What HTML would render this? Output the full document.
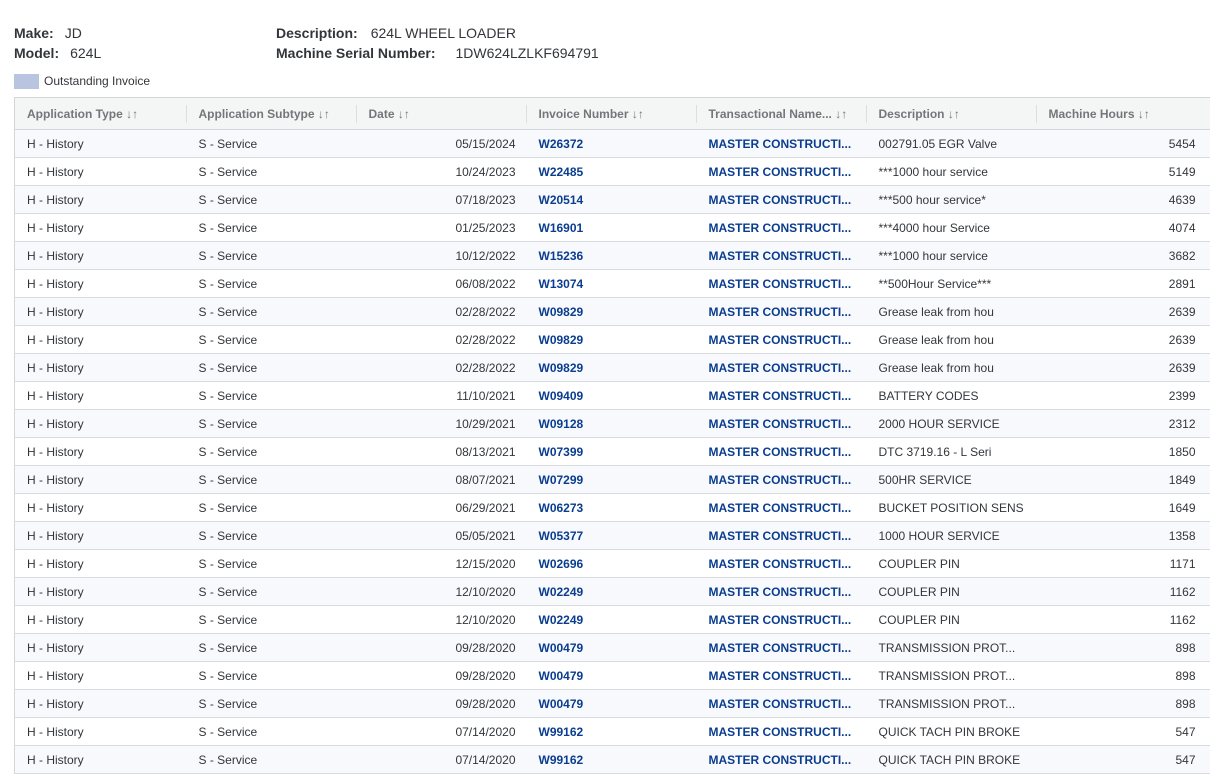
<!DOCTYPE html>
<html><head><meta charset="utf-8"><style>
*{margin:0;padding:0;box-sizing:border-box}
body{width:1210px;height:775px;overflow:hidden;background:#fff;font-family:"Liberation Sans",Arial,sans-serif;color:#32363a;position:relative}
.info{position:absolute;font-size:14px;line-height:20px}
.info b{color:#32363a;margin-right:11px}
.leg{position:absolute;left:14px;top:74px;font-size:12px;color:#32363a}
.leg span{display:inline-block;width:25px;height:15px;background:#b9c4e0;vertical-align:middle;margin-right:5px}
table{position:absolute;left:14px;top:97px;width:1196px;border-collapse:collapse;table-layout:fixed;font-size:12px;border-left:1px solid #d3d6d9;border-top:1px solid #d3d6d9}
th{height:32px;background:#f4f5f5;color:#74777a;font-weight:bold;text-align:left;padding-left:12px;border-bottom:1px solid #d3d6d9;position:relative;white-space:nowrap}
th:after{content:"";position:absolute;right:0;top:7px;height:18px;border-right:1px solid #dcdfe1}
td{height:28px;padding:0 12px;border-bottom:1px solid #d9dcdf;white-space:nowrap;overflow:hidden}
tr:nth-child(even) td{background:#f8f9fc}
td.r{text-align:right;padding-right:11px}
td:last-child.r{padding-right:15px}
td.l{color:#0a3d8f;font-weight:bold}
</style></head><body>
<div class="info" style="left:14px;top:23px"><b>Make:</b>JD<br><b>Model:</b>624L</div>
<div class="info" style="left:276px;top:23px"><b style="margin-right:13px">Description:</b>624L WHEEL LOADER<br><b style="margin-right:20px">Machine Serial Number:</b>1DW624LZLKF694791</div>
<div class="leg"><span></span>Outstanding Invoice</div>
<table>
<colgroup><col style="width:172px"><col style="width:170px"><col style="width:170px"><col style="width:170px"><col style="width:170px"><col style="width:170px"><col style="width:174px"></colgroup>
<tr><th>Application Type ↓↑</th><th>Application Subtype ↓↑</th><th>Date ↓↑</th><th>Invoice Number ↓↑</th><th>Transactional Name... ↓↑</th><th>Description ↓↑</th><th>Machine Hours ↓↑</th></tr>
<tr><td>H - History</td><td>S - Service</td><td class="r">05/15/2024</td><td class="l">W26372</td><td class="l">MASTER CONSTRUCTI...</td><td>002791.05 EGR Valve</td><td class="r">5454</td></tr>
<tr><td>H - History</td><td>S - Service</td><td class="r">10/24/2023</td><td class="l">W22485</td><td class="l">MASTER CONSTRUCTI...</td><td>***1000 hour service</td><td class="r">5149</td></tr>
<tr><td>H - History</td><td>S - Service</td><td class="r">07/18/2023</td><td class="l">W20514</td><td class="l">MASTER CONSTRUCTI...</td><td>***500 hour service*</td><td class="r">4639</td></tr>
<tr><td>H - History</td><td>S - Service</td><td class="r">01/25/2023</td><td class="l">W16901</td><td class="l">MASTER CONSTRUCTI...</td><td>***4000 hour Service</td><td class="r">4074</td></tr>
<tr><td>H - History</td><td>S - Service</td><td class="r">10/12/2022</td><td class="l">W15236</td><td class="l">MASTER CONSTRUCTI...</td><td>***1000 hour service</td><td class="r">3682</td></tr>
<tr><td>H - History</td><td>S - Service</td><td class="r">06/08/2022</td><td class="l">W13074</td><td class="l">MASTER CONSTRUCTI...</td><td>**500Hour Service***</td><td class="r">2891</td></tr>
<tr><td>H - History</td><td>S - Service</td><td class="r">02/28/2022</td><td class="l">W09829</td><td class="l">MASTER CONSTRUCTI...</td><td>Grease leak from hou</td><td class="r">2639</td></tr>
<tr><td>H - History</td><td>S - Service</td><td class="r">02/28/2022</td><td class="l">W09829</td><td class="l">MASTER CONSTRUCTI...</td><td>Grease leak from hou</td><td class="r">2639</td></tr>
<tr><td>H - History</td><td>S - Service</td><td class="r">02/28/2022</td><td class="l">W09829</td><td class="l">MASTER CONSTRUCTI...</td><td>Grease leak from hou</td><td class="r">2639</td></tr>
<tr><td>H - History</td><td>S - Service</td><td class="r">11/10/2021</td><td class="l">W09409</td><td class="l">MASTER CONSTRUCTI...</td><td>BATTERY CODES</td><td class="r">2399</td></tr>
<tr><td>H - History</td><td>S - Service</td><td class="r">10/29/2021</td><td class="l">W09128</td><td class="l">MASTER CONSTRUCTI...</td><td>2000 HOUR SERVICE</td><td class="r">2312</td></tr>
<tr><td>H - History</td><td>S - Service</td><td class="r">08/13/2021</td><td class="l">W07399</td><td class="l">MASTER CONSTRUCTI...</td><td>DTC 3719.16 - L Seri</td><td class="r">1850</td></tr>
<tr><td>H - History</td><td>S - Service</td><td class="r">08/07/2021</td><td class="l">W07299</td><td class="l">MASTER CONSTRUCTI...</td><td>500HR SERVICE</td><td class="r">1849</td></tr>
<tr><td>H - History</td><td>S - Service</td><td class="r">06/29/2021</td><td class="l">W06273</td><td class="l">MASTER CONSTRUCTI...</td><td>BUCKET POSITION SENS</td><td class="r">1649</td></tr>
<tr><td>H - History</td><td>S - Service</td><td class="r">05/05/2021</td><td class="l">W05377</td><td class="l">MASTER CONSTRUCTI...</td><td>1000 HOUR SERVICE</td><td class="r">1358</td></tr>
<tr><td>H - History</td><td>S - Service</td><td class="r">12/15/2020</td><td class="l">W02696</td><td class="l">MASTER CONSTRUCTI...</td><td>COUPLER PIN</td><td class="r">1171</td></tr>
<tr><td>H - History</td><td>S - Service</td><td class="r">12/10/2020</td><td class="l">W02249</td><td class="l">MASTER CONSTRUCTI...</td><td>COUPLER PIN</td><td class="r">1162</td></tr>
<tr><td>H - History</td><td>S - Service</td><td class="r">12/10/2020</td><td class="l">W02249</td><td class="l">MASTER CONSTRUCTI...</td><td>COUPLER PIN</td><td class="r">1162</td></tr>
<tr><td>H - History</td><td>S - Service</td><td class="r">09/28/2020</td><td class="l">W00479</td><td class="l">MASTER CONSTRUCTI...</td><td>TRANSMISSION PROT...</td><td class="r">898</td></tr>
<tr><td>H - History</td><td>S - Service</td><td class="r">09/28/2020</td><td class="l">W00479</td><td class="l">MASTER CONSTRUCTI...</td><td>TRANSMISSION PROT...</td><td class="r">898</td></tr>
<tr><td>H - History</td><td>S - Service</td><td class="r">09/28/2020</td><td class="l">W00479</td><td class="l">MASTER CONSTRUCTI...</td><td>TRANSMISSION PROT...</td><td class="r">898</td></tr>
<tr><td>H - History</td><td>S - Service</td><td class="r">07/14/2020</td><td class="l">W99162</td><td class="l">MASTER CONSTRUCTI...</td><td>QUICK TACH PIN BROKE</td><td class="r">547</td></tr>
<tr><td>H - History</td><td>S - Service</td><td class="r">07/14/2020</td><td class="l">W99162</td><td class="l">MASTER CONSTRUCTI...</td><td>QUICK TACH PIN BROKE</td><td class="r">547</td></tr>
</table>
</body></html>
